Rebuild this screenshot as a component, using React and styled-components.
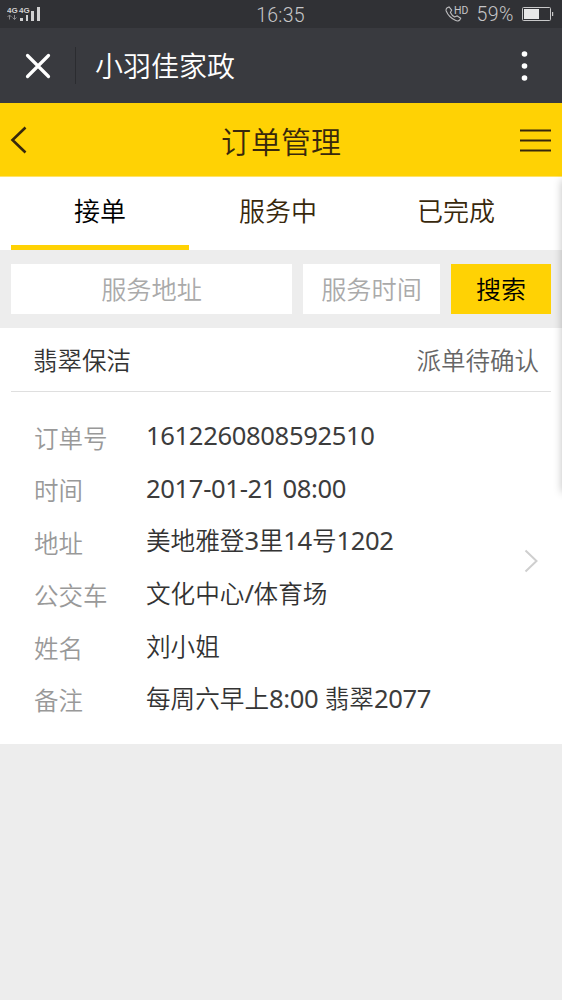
import React, { useState } from "react";
import styled, { createGlobalStyle } from "styled-components";

const GlobalStyle = createGlobalStyle`
    * {
        box-sizing: border-box;
    }
    body {
        margin: 0;
        background: #ededed;
        font-family: "Noto Sans", "Noto Sans CJK SC", sans-serif;
        font-weight: 350;
    }
`;

const tabs = ["接单", "服务中", "已完成"];

const order = {
    service: "翡翠保洁",
    status: "派单待确认",
    details: [
        { label: "订单号", value: "1612260808592510" },
        { label: "时间", value: "2017-01-21 08:00" },
        { label: "地址", value: "美地雅登3里14号1202" },
        { label: "公交车", value: "文化中心/体育场" },
        { label: "姓名", value: "刘小姐" },
        { label: "备注", value: "每周六早上8:00 翡翠2077" },
    ],
};

function SignalIcon() {
    return (
        <svg width="36" height="18" viewBox="0 0 36 18">
            <g fill="#d0d0d1">
                <SignalText x="0" y="8">4G</SignalText>
                <SignalText x="12" y="8">4G</SignalText>
                <rect x="13" y="13" width="3" height="3" />
                <rect x="19" y="10" width="2" height="6" />
                <rect x="24" y="6" width="3" height="10" />
                <rect x="30" y="2" width="3" height="14" />
            </g>
            <path
                d="M2.5 14.5V10M.5 12l2-2 2 2M7.5 10v4.5M5.5 12.5l2 2 2-2"
                fill="none"
                stroke="#8b8b8d"
            />
        </svg>
    );
}

function CallIcon() {
    return (
        <svg width="24" height="18" viewBox="0 0 24 18">
            <path
                d="M2.2 2.8 4.1 1.9 6.7 5.1 5.4 7.4c1 2.1 2.3 3.5 4.3 4.6l2.3-1.1 3.7 2.4-.9 1.6c-1 1.3-2.6 1.3-4.5.4C6 13.2 2.7 9.7 1.2 6c-.4-1.3 0-2.4 1-3.2z"
                fill="none"
                stroke="#bdbdbf"
                strokeWidth="1.1"
            />
            <HdText x="9" y="9">HD</HdText>
        </svg>
    );
}

function App() {
    const [active, setActive] = useState(0);

    return (
        <Page>
            <GlobalStyle />
            <StatusBar>
                <SignalIcon />
                <Clock>16:35</Clock>
                <StatusRight>
                    <CallIcon />
                    <Percent>59%</Percent>
                    <svg width="32" height="14" viewBox="0 0 32 14">
                        <rect x=".5" y=".5" width="28" height="13" rx="1" fill="none" stroke="#c8c8c9" />
                        <rect x="2" y="2" width="15" height="10" fill="#e8e8e8" />
                        <rect x="30" y="5" width="1.2" height="4" fill="#c8c8c9" />
                    </svg>
                </StatusRight>
            </StatusBar>
            <AppBar>
                <svg width="26" height="26" viewBox="0 0 26 26">
                    <path
                        d="M2.5 2.5 23.5 23.5M23.5 2.5 2.5 23.5"
                        stroke="#fff"
                        strokeWidth="3.2"
                        strokeLinecap="round"
                    />
                </svg>
                <Divider />
                <AppName>小羽佳家政</AppName>
                <svg width="8" height="32" viewBox="0 0 8 32">
                    <g fill="#fff">
                        <circle cx="3.5" cy="4" r="2.8" />
                        <circle cx="3.5" cy="16" r="2.8" />
                        <circle cx="3.5" cy="28" r="2.8" />
                    </g>
                </svg>
            </AppBar>
            <Header>
                <svg width="18" height="28" viewBox="0 0 18 28">
                    <path d="M15.5 1.5 2.5 14l13 12.5" fill="none" stroke="#38280c" strokeWidth="2.6" />
                </svg>
                <Title>订单管理</Title>
                <svg width="31" height="24" viewBox="0 0 31 24">
                    <path d="M0 2.5h31M0 12.5h31M0 22.5h31" stroke="#38280c" strokeWidth="2.2" />
                </svg>
            </Header>
            <Tabs>
                {tabs.map((tab, i) => (
                    <Tab key={tab} $active={i === active} onClick={() => setActive(i)}>
                        {tab}
                    </Tab>
                ))}
            </Tabs>
            <Search>
                <Field $width="281px" placeholder="服务地址" />
                <Field $width="137px" placeholder="服务时间" />
                <SearchButton>搜索</SearchButton>
            </Search>
            <Card>
                <CardHead>
                    <span>{order.service}</span>
                    <Status>{order.status}</Status>
                </CardHead>
                <CardBody>
                    <Details>
                        {order.details.map((item) => (
                            <Row key={item.label}>
                                <Label>{item.label}</Label>
                                <Value>
                                    {item.value
                                        .split(/([\d:\-/ ]+)/)
                                        .map((part, i) => (i % 2 ? <Digits key={i}>{part}</Digits> : part))}
                                </Value>
                            </Row>
                        ))}
                    </Details>
                    <Arrow width="15" height="24" viewBox="0 0 15 24">
                        <path d="M1.5 1.5 12.5 12 1.5 22.5" fill="none" stroke="#cfcfcf" strokeWidth="2" />
                    </Arrow>
                </CardBody>
            </Card>
            <EdgeShadow />
        </Page>
    );
}

export default App;

const Page = styled.div`
    position: relative;
    width: 562px;
    height: 1000px;
    overflow: hidden;
    background: #ededed;
`;
const StatusBar = styled.div`
    display: grid;
    grid-template-columns: 1fr auto 1fr;
    align-items: center;
    height: 28px;
    padding: 0 8px 0 7px;
    background: #303135;
    color: #c6c6c8;
    font-family: Roboto, sans-serif;
`;
const SignalText = styled.text`
    font: 700 8px "Liberation Sans", sans-serif;
`;
const HdText = styled.text`
    font: 400 10.5px Roboto, sans-serif;
    fill: #c6c6c8;
`;
const Clock = styled.span`
    padding-top: 2px;
    font-size: 19.5px;
    letter-spacing: 0.2px;
`;
const StatusRight = styled.div`
    display: flex;
    align-items: center;
    justify-content: flex-end;
`;
const Percent = styled.span`
    margin: 1px 8px 0 7px;
    font-size: 19.5px;
    letter-spacing: 0.5px;
`;
const AppBar = styled.div`
    display: flex;
    align-items: center;
    height: 75px;
    padding: 0 33px 0 25px;
    background: #393a3f;
    color: #fff;
`;
const Divider = styled.div`
    width: 1px;
    height: 37px;
    margin: 0 19px 0 24px;
    background: #2b2c30;
`;
const AppName = styled.div`
    flex: 1;
    padding-top: 1px;
    font-size: 28px;
    line-height: 40px;
`;
const Header = styled.div`
    display: flex;
    align-items: center;
    justify-content: space-between;
    height: 74px;
    padding: 0 11px 0 10px;
    border-bottom: 1px solid #ffe36a;
    background: #ffd204;
    color: #38280c;
`;
const Title = styled.div`
    padding: 4px 0 0 14px;
    font-size: 30px;
    line-height: 44px;
`;
const Tabs = styled.div`
    display: flex;
    height: 73px;
    padding: 0 11px;
    background: #fff;
`;
const Tab = styled.div`
    width: 178px;
    padding-top: 15px;
    border-bottom: 5px solid ${({ $active }) => ($active ? "#ffd204" : "transparent")};
    color: ${({ $active }) => ($active ? "#000" : "#38280c")};
    font-size: 26px;
    line-height: 38px;
    text-align: center;
`;
const Search = styled.div`
    display: flex;
    gap: 11px;
    height: 78px;
    padding: 14px 11px;
`;
const Field = styled.input`
    width: ${({ $width }) => $width};
    height: 50px;
    padding: 0;
    border: 0;
    background: #fff;
    font: inherit;
    font-size: 25.2px;
    text-align: center;
    &::placeholder {
        color: #aaa;
    }
`;
const SearchButton = styled.button`
    width: 100px;
    height: 50px;
    padding: 0 0 2px;
    border: 0;
    background: #ffd204;
    color: #000;
    font: inherit;
    font-size: 25px;
`;
const Card = styled.div`
    height: 416px;
    padding: 0 11px;
    background: #fff;
    color: #333;
    font-size: 24.5px;
`;
const CardHead = styled.div`
    display: flex;
    align-items: center;
    justify-content: space-between;
    height: 64px;
    padding: 0 12px 0 22px;
    border-bottom: 1px solid #dfdfdf;
`;
const Status = styled.span`
    color: #666;
`;
const CardBody = styled.div`
    display: flex;
    align-items: center;
    padding: 17px 12px 0 23px;
`;
const Details = styled.div`
    flex: 1;
`;
const Row = styled.div`
    display: flex;
    height: 52.6px;
    line-height: 52.6px;
`;
const Label = styled.span`
    width: 112px;
    padding-top: 3.5px;
    color: #999;
`;
const Value = styled.span`
    padding-top: 1.2px;
    font-size: 24.6px;
    white-space: nowrap;
`;
const Digits = styled.span`
    color: #3c3c3c;
    font-size: 25.6px;
    font-weight: 400;
    letter-spacing: -0.35px;
`;
const Arrow = styled.svg`
    margin-bottom: 12px;
`;
const EdgeShadow = styled.div`
    position: absolute;
    top: 180px;
    left: 562px;
    width: 10px;
    height: 312px;
    box-shadow: 0 0 8px rgba(0, 0, 0, 0.25);
`;
